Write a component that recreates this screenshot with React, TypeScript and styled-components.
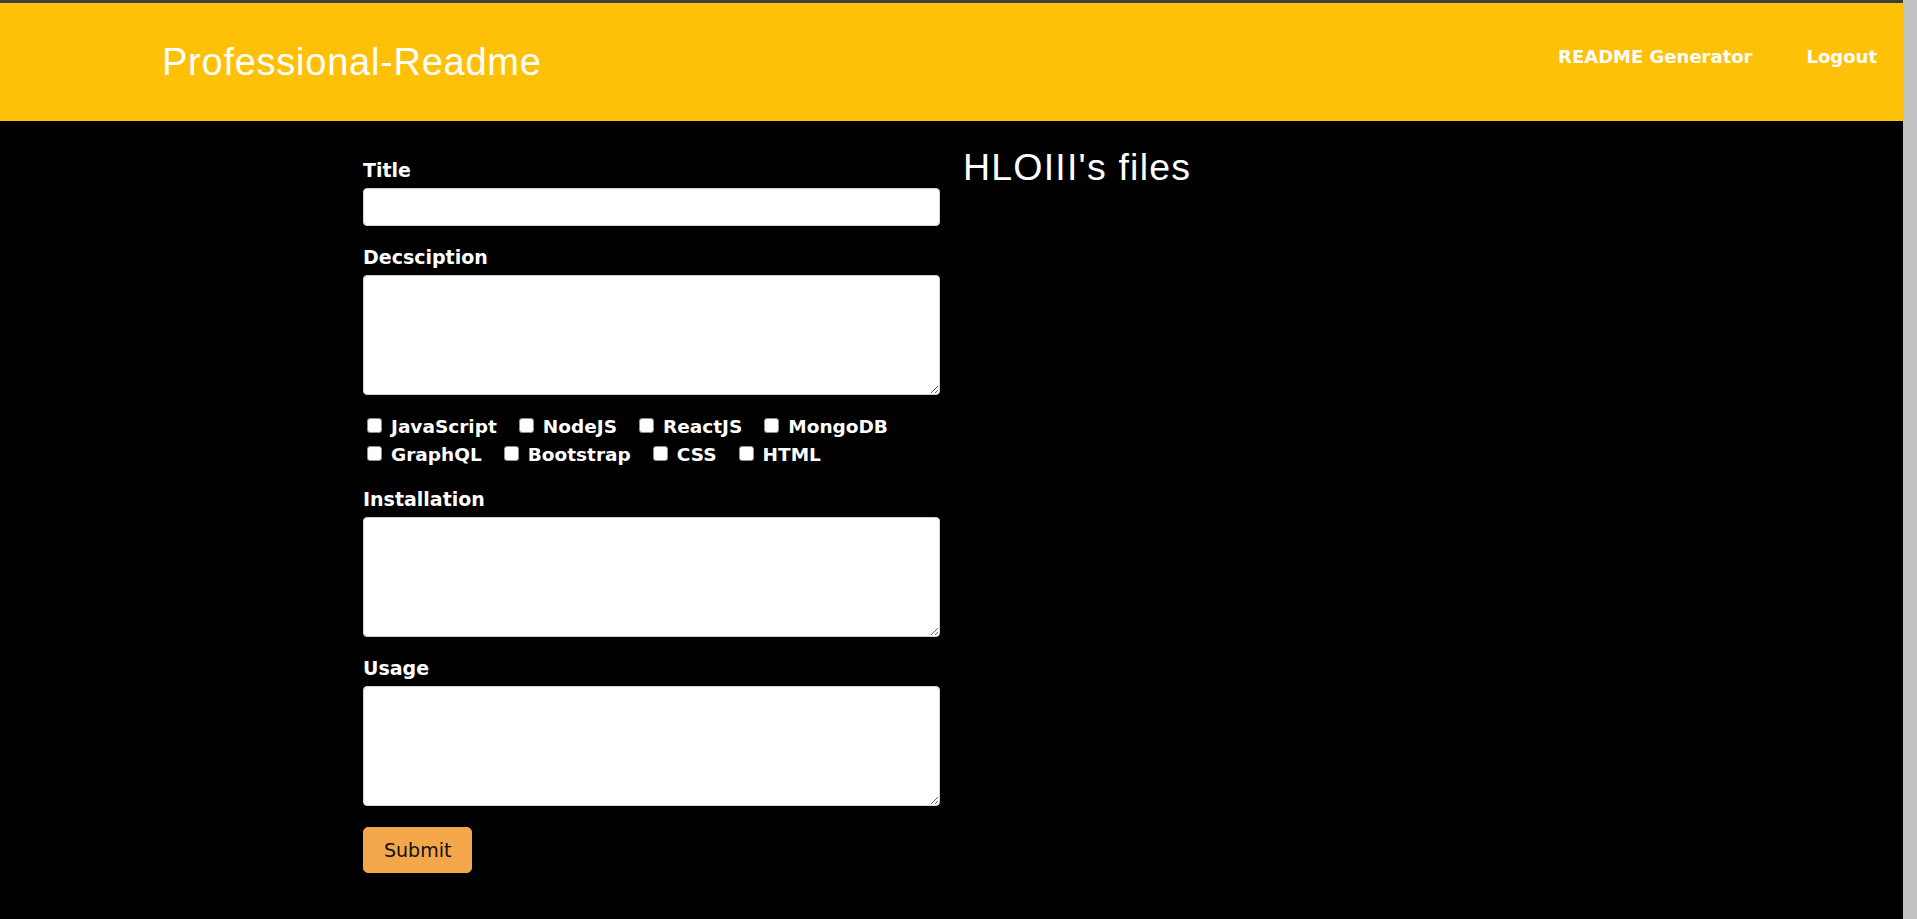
import styled, { createGlobalStyle } from "styled-components";
import { useState } from "react";

const TECHS = [
  "JavaScript",
  "NodeJS",
  "ReactJS",
  "MongoDB",
  "GraphQL",
  "Bootstrap",
  "CSS",
  "HTML",
];

export default function App() {
  const [checked, setChecked] = useState<string[]>([]);

  const toggleTech = (name: string) => {
    setChecked((prev) =>
      prev.includes(name) ? prev.filter((t) => t !== name) : [...prev, name]
    );
  };

  return (
    <>
      <GlobalStyle />
      <Header>
        <Brand>Professional-Readme</Brand>
        <Nav>
          <NavLink href="#">README Generator</NavLink>
          <NavLink href="#">Logout</NavLink>
        </Nav>
      </Header>
      <Main>
        <Form onSubmit={(e) => e.preventDefault()}>
          <FieldGroup>
            <Label htmlFor="title">Title</Label>
            <TextInput id="title" type="text" />
          </FieldGroup>
          <FieldGroup>
            <Label htmlFor="description">Decsciption</Label>
            <TextArea id="description" />
          </FieldGroup>
          <CheckGroup>
            {TECHS.map((tech) => (
              <CheckItem key={tech}>
                <CheckBox
                  type="checkbox"
                  checked={checked.includes(tech)}
                  onChange={() => toggleTech(tech)}
                />
                {tech}
              </CheckItem>
            ))}
          </CheckGroup>
          <FieldGroup>
            <Label htmlFor="installation">Installation</Label>
            <TextArea id="installation" />
          </FieldGroup>
          <FieldGroup>
            <Label htmlFor="usage">Usage</Label>
            <TextArea id="usage" />
          </FieldGroup>
          <SubmitButton type="submit">Submit</SubmitButton>
        </Form>
        <FilesColumn>
          <FilesTitle>HLOIII's files</FilesTitle>
        </FilesColumn>
      </Main>
    </>
  );
}

// the right strip stands in for the page scrollbar of the screenshot
const GlobalStyle = createGlobalStyle`
  html {
    background: #c1c1c1;
  }
  body {
    margin: 0 14px 0 0;
    min-height: 100vh;
    background: #000;
    font-family: "Comic Sans MS", "DejaVu Sans", sans-serif;
  }
`;

const Header = styled.header`
  display: flex;
  align-items: center;
  justify-content: space-between;
  height: 118px;
  padding: 0 26px 0 162px;
  background: #ffc107;
  border-top: 3px solid #3d3d3d;
`;

const Brand = styled.div`
  font-family: "Liberation Sans", Arial, sans-serif;
  font-size: 38px;
  letter-spacing: 0.75px;
  line-height: 1;
  color: #fff;
`;

const Nav = styled.nav`
  display: flex;
  gap: 54px;
  padding-bottom: 12px;
`;

const NavLink = styled.a`
  color: #fff;
  font-size: 18px;
  font-weight: 700;
  text-decoration: none;
`;

const Main = styled.main`
  display: grid;
  grid-template-columns: 577px 577px;
  justify-content: center;
  column-gap: 23px;
  padding: 24px 0 80px;
`;

const Form = styled.form`
  display: flex;
  flex-direction: column;
  padding-top: 11px;
`;

const FieldGroup = styled.div`
  display: flex;
  flex-direction: column;
  margin-bottom: 17px;
`;

const Label = styled.label`
  color: #fff;
  font-size: 19px;
  font-weight: 700;
  line-height: 28px;
  margin-bottom: 4px;
`;

const TextInput = styled.input`
  box-sizing: border-box;
  width: 100%;
  height: 38px;
  border: 1px solid #ced4da;
  border-radius: 4px;
  background: #fff;
  font-size: 16px;
`;

const TextArea = styled.textarea`
  box-sizing: border-box;
  width: 100%;
  height: 120px;
  border: 1px solid #ced4da;
  border-radius: 4px;
  background: #fff;
  resize: vertical;
  font-size: 16px;
`;

const CheckGroup = styled.div`
  display: flex;
  flex-wrap: wrap;
  margin: 1px 0 16px;
`;

const CheckItem = styled.label`
  display: inline-flex;
  align-items: center;
  margin-right: 18px;
  color: #fff;
  font-size: 18.5px;
  font-weight: 700;
  line-height: 28px;
`;

const CheckBox = styled.input`
  appearance: none;
  width: 15px;
  height: 15px;
  margin: 0 9px 4px 4px;
  border: 1px solid #8f8f8f;
  border-radius: 3px;
  background: #fff;

  &:checked {
    background: #0075ff;
    border-color: #0075ff;
  }
`;

const SubmitButton = styled.button`
  align-self: flex-start;
  height: 46px;
  margin-top: 4px;
  padding: 0 20px;
  border: 1px solid #f3a64a;
  border-radius: 5px;
  background: #f3a64a;
  color: #111;
  font-family: inherit;
  font-size: 19px;
`;

const FilesColumn = styled.section`
  display: flex;
  flex-direction: column;
`;

const FilesTitle = styled.h2`
  margin: 0;
  color: #fff;
  font-family: "Liberation Sans", Arial, sans-serif;
  font-size: 37.5px;
  font-weight: 400;
  letter-spacing: 1.2px;
  line-height: 1.2;
`;
